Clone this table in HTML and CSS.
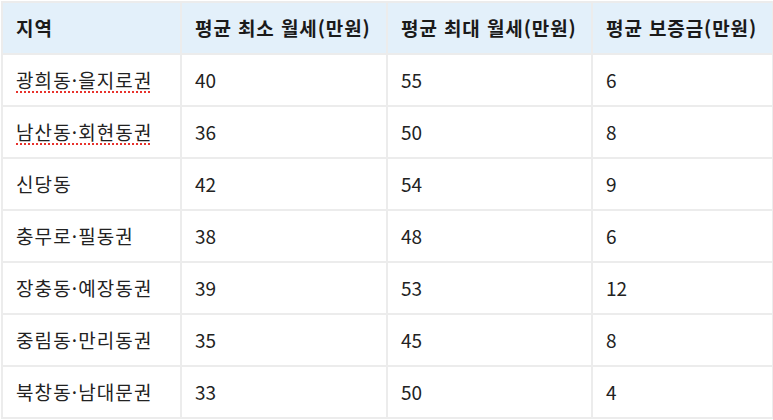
FILE: index.html
```html
<!DOCTYPE html>
<html lang="ko">
<head>
<meta charset="utf-8">
<link rel="stylesheet" href="styles.css">
</head>
<body>
<table class="rent-table">
  <colgroup>
    <col class="c1"><col class="c2"><col class="c3"><col class="c4">
  </colgroup>
  <thead>
    <tr><th>지역</th><th>평균 최소 월세(만원)</th><th>평균 최대 월세(만원)</th><th>평균 보증금(만원)</th></tr>
  </thead>
  <tbody>
    <tr><td class="area"><span class="spell">광희동·을지로권</span></td><td>40</td><td>55</td><td>6</td></tr>
    <tr><td class="area"><span class="spell">남산동·회현동권</span></td><td>36</td><td>50</td><td>8</td></tr>
    <tr><td class="area">신당동</td><td>42</td><td>54</td><td>9</td></tr>
    <tr><td class="area">충무로·필동권</td><td>38</td><td>48</td><td>6</td></tr>
    <tr><td class="area">장충동·예장동권</td><td>39</td><td>53</td><td>12</td></tr>
    <tr><td class="area">중림동·만리동권</td><td>35</td><td>45</td><td>8</td></tr>
    <tr><td class="area">북창동·남대문권</td><td>33</td><td>50</td><td>4</td></tr>
  </tbody>
</table>
</body>
</html>
```
FILE: styles.css
```css
html, body {
  margin: 0;
  padding: 0;
  background: #ffffff;
}
body {
  padding: 1px 0 0 1px;
  font-family: "Noto Sans CJK KR", "Noto Sans", sans-serif;
  color: #222222;
}
.rent-table {
  border-collapse: collapse;
  table-layout: fixed;
  width: 771px;
  font-size: 19px;
}
.c1 { width: 179px; }
.c2 { width: 206px; }
.c3 { width: 205px; }
.c4 { width: 181px; }
.rent-table th,
.rent-table td {
  border: 2px solid #ececec;
  height: 50px;
  padding: 0 0 0 13px;
  text-align: left;
  vertical-align: middle;
  white-space: nowrap;
  line-height: 1.2;
}
.rent-table th {
  background: #e3f0fa;
  font-weight: 700;
  color: #1a1a1a;
  letter-spacing: 0.9px;
}
.rent-table td {
  font-weight: 400;
  color: #222222;
}
.rent-table td.area {
  letter-spacing: 1.1px;
}
.spell {
  text-decoration: underline dotted #e8322c;
  text-decoration-thickness: 2px;
  text-underline-offset: 4px;
}
```
